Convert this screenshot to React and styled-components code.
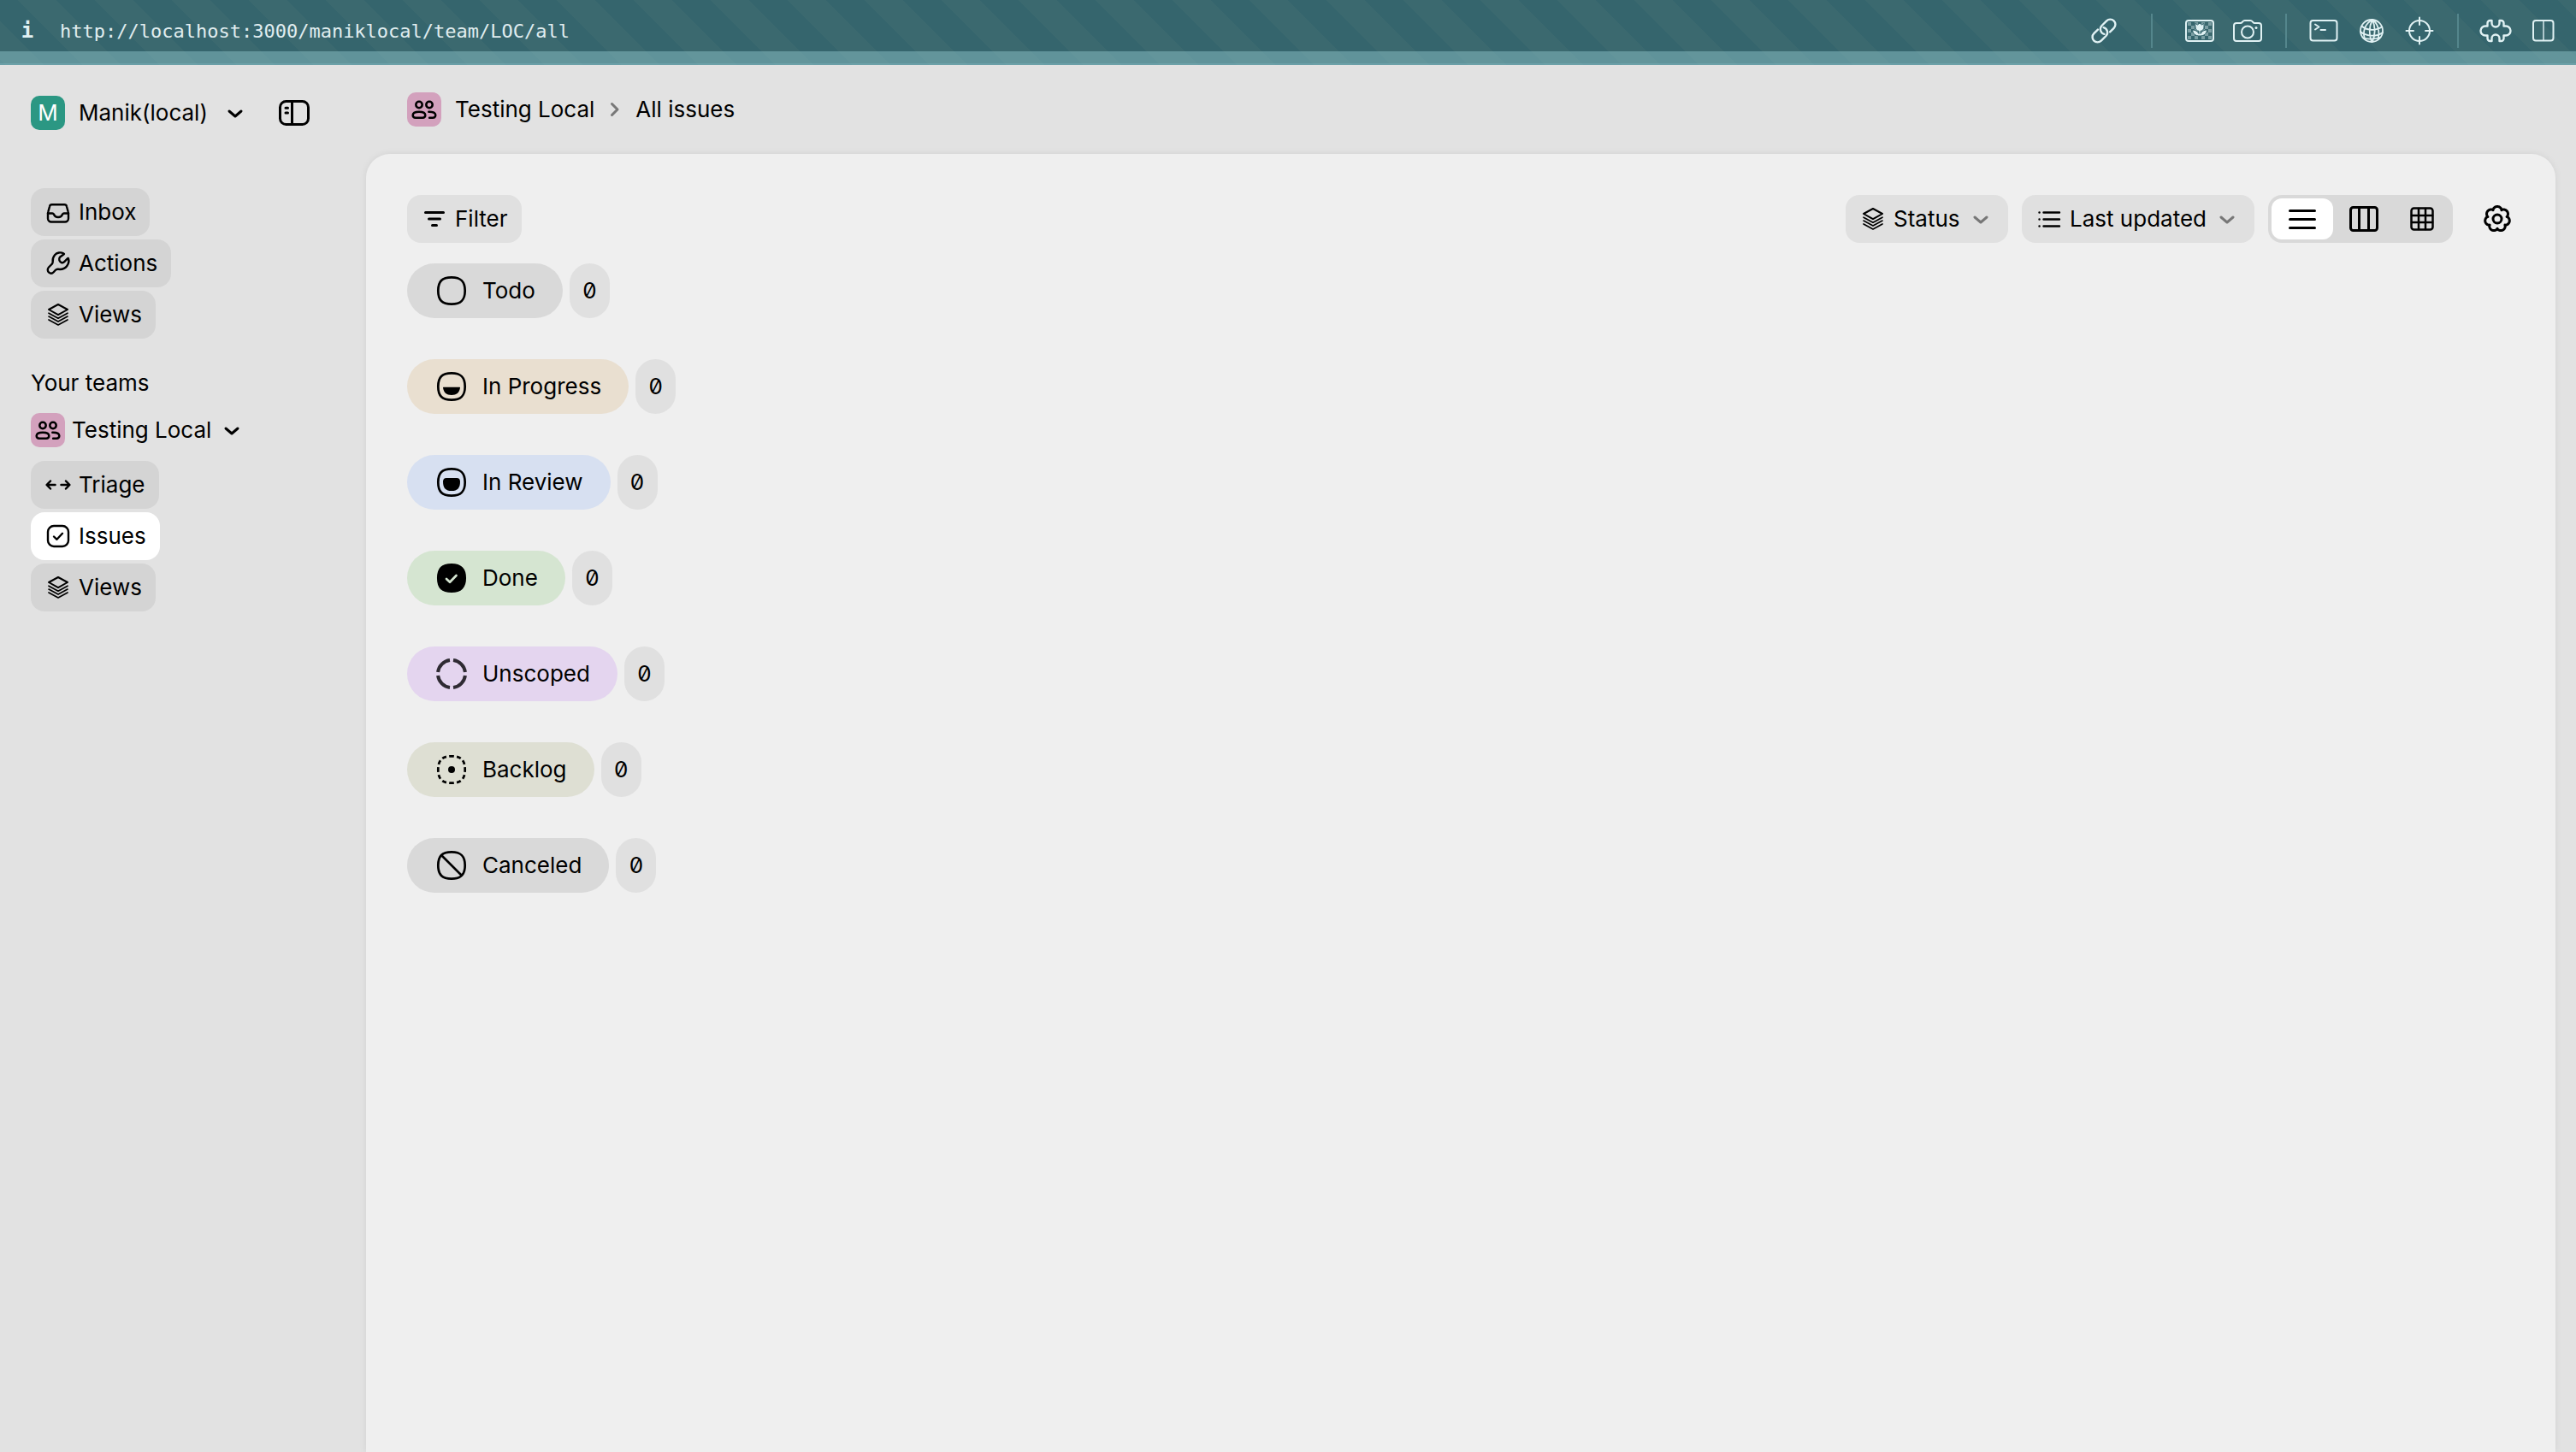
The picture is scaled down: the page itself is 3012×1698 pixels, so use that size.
import React from "react";
import styled, { createGlobalStyle } from "styled-components";

const GlobalStyle = createGlobalStyle`
  *, *::before, *::after { box-sizing: border-box; }
  body {
    margin: 0;
    background: #e2e2e2;
    color: #000;
    font-family: Inter, "Liberation Sans", sans-serif;
    font-size: 26px;
    line-height: 32px;
  }
  a { color: inherit; text-decoration: none; }
  button, input, select { font: inherit; color: inherit; }
`;

const Page = styled.div`
  display: flex;
  flex-direction: column;
  min-height: 100vh;
`;

/* ---------- address bar ---------- */

const AddressBar = styled.header`
  background-color: #35656d;
  background-image: linear-gradient(
    45deg,
    #3b696f 25%, transparent 25%, transparent 50%,
    #3b696f 50%, #3b696f 75%, transparent 75%
  );
  background-size: 90px 90px;
  background-position: 21px 0;
  color: #e0f1f3;
`;

const AddressRow = styled.div`
  display: flex;
  align-items: center;
  height: 60px;
  padding: 12px 10px 0 24px;
`;

const AddressEdge = styled.div`
  height: 16px;
  background: rgba(149, 204, 208, 0.45);
  border-bottom: 2px solid rgba(130, 190, 200, 0.3);
`;

const InfoButton = styled.button`
  width: 16px;
  padding: 0;
  border: 0;
  background: none;
  font-family: "DejaVu Sans Mono", monospace;
  font-size: 24px;
  font-weight: 700;
`;

const AddressInput = styled.input`
  flex: 1;
  min-width: 0;
  margin-left: 30px;
  padding: 2px 0 0;
  border: 0;
  background: none;
  color: #e0edef;
  font-family: "DejaVu Sans Mono", monospace;
  font-size: 22px;
`;

const ToolButton = styled.button`
  display: flex;
  align-items: center;
  justify-content: center;
  width: 56px;
  height: 48px;
  padding: 0;
  border: 0;
  background: none;
`;

const ToolDivider = styled.span`
  width: 2px;
  height: 40px;
  margin: ${(p) => (p.$wide ? "0 27px" : "0 15px 0 16px")};
  background: #54868c;
`;

/* ---------- shell ---------- */

const Shell = styled.div`
  display: flex;
  flex: 1;
`;

const Sidebar = styled.aside`
  flex: 0 0 428px;
  padding: 36px 66px 36px 36px;
`;

const WorkspaceRow = styled.div`
  display: flex;
  align-items: center;
  justify-content: space-between;
  height: 40px;
  margin-bottom: 68px;
`;

const Switcher = styled.button`
  display: flex;
  align-items: center;
  gap: ${(p) => p.$gap}px;
  height: 40px;
  padding: 0;
  border: 0;
  background: none;
  white-space: nowrap;
`;

const Avatar = styled.span`
  display: flex;
  align-items: center;
  justify-content: center;
  flex: none;
  width: 40px;
  height: 40px;
  border-radius: 10px;
  background: ${(p) => p.$bg};
  color: ${(p) => p.$fg || "#000"};
`;

const IconButton = styled.button`
  display: flex;
  align-items: center;
  justify-content: center;
  padding: 0;
  border: 0;
  background: none;
  height: 40px;
  width: ${(p) => p.$width}px;
`;

const NavList = styled.nav`
  display: flex;
  flex-direction: column;
  align-items: flex-start;
  gap: 4px;
`;

const NavLink = styled.a`
  display: flex;
  align-items: center;
  gap: 8px;
  height: 56px;
  padding: 0 16px;
  border-radius: 16px;
  background: ${(p) => (p.$active ? "#fff" : "#d4d4d4")};
`;

const SectionTitle = styled.h2`
  margin: 34px 0 17px;
  font-size: 26px;
  font-weight: 400;
  line-height: 36px;
`;

const TeamBlock = styled.div`
  display: flex;
  flex-direction: column;
  align-items: flex-start;
  gap: 16px;
`;

/* ---------- main ---------- */

const Main = styled.main`
  display: flex;
  flex: 1;
  flex-direction: column;
  min-width: 0;
  padding-right: 24px;
`;

const Breadcrumb = styled.nav`
  display: flex;
  align-items: center;
  height: 104px;
  padding-left: 48px;
`;

const Crumb = styled.a`
  display: flex;
  align-items: center;
  gap: 16px;
`;

const CrumbArrow = styled.span`
  display: flex;
  padding: 0 8px;
  color: #777;
`;

const Panel = styled.section`
  flex: 1;
  padding: 48px;
  border-radius: 28px 28px 0 0;
  background: #efefef;
  box-shadow: 0 0 8px rgba(0, 0, 0, 0.07);
`;

const Toolbar = styled.div`
  display: flex;
  align-items: center;
  gap: 16px;
  margin-bottom: 24px;
`;

const FilterButton = styled.button`
  display: flex;
  align-items: center;
  gap: 8px;
  height: 56px;
  margin-right: auto;
  padding: 0 16px;
  border: 0;
  border-radius: 16px;
  background: #e0e0e0;
`;

const SelectBox = styled.label`
  display: flex;
  align-items: center;
  gap: 8px;
  height: 56px;
  padding: 0 16px;
  border-radius: 16px;
  background: #e0e0e0;
`;

const Select = styled.select`
  appearance: none;
  height: 56px;
  padding: 0;
  border: 0;
  background: none;
`;

const Muted = styled.span`
  display: flex;
  color: #777;
`;

const Segments = styled.fieldset`
  display: flex;
  height: 56px;
  margin: 0;
  padding: 4px;
  border: 0;
  border-radius: 16px;
  background: #d9d9d9;
`;

const Segment = styled.label`
  display: flex;
  align-items: center;
  justify-content: center;
  width: ${(p) => p.$width}px;
  height: 48px;
  border-radius: 12px;
  &:has(input:checked) { background: #fff; }
`;

const HiddenRadio = styled.input`
  appearance: none;
  width: 0;
  height: 0;
  margin: 0;
`;

const SettingsSlot = styled.div`
  padding-left: 16px;
`;

const GroupList = styled.div`
  display: flex;
  flex-direction: column;
  gap: 48px;
`;

const GroupRow = styled.div`
  display: flex;
  align-items: center;
  gap: 8px;
`;

const GroupPill = styled.button`
  display: flex;
  align-items: center;
  gap: 16px;
  height: 64px;
  padding: 0 32px;
  border: 0;
  border-radius: 32px;
  background: ${(p) => p.$bg};
`;

const Count = styled.span`
  display: flex;
  align-items: center;
  justify-content: center;
  width: 47px;
  height: 64px;
  border-radius: 24px;
  background: #e0e0e0;
  font-feature-settings: "zero" 1;
`;

/* ---------- icons ---------- */

function Icon({ size = 32, stroke = 2, children }) {
  return (
    <svg width={size} height={size} viewBox={`0 0 ${size} ${size}`} fill="none" stroke="currentColor"
      strokeWidth={stroke} strokeLinecap="round" strokeLinejoin="round" aria-hidden="true">
      {children}
    </svg>
  );
}

const ChevronDown = () => <Icon stroke={3}><path d="M9 14l7 6 7-6" /></Icon>;
const ChevronRight = () => <Icon stroke={3}><path d="M12.5 9.5l6.5 6.5-6.5 6.5" /></Icon>;

const InboxIcon = () => (
  <Icon stroke={2.4}>
    <path d="M8.5 7.3h15a2.5 2.5 0 0 1 2.4 1.9l1.8 6.6q.3 1 .3 2v5.700a4 4 0 0 1-4 4H8a4 4 0 0 1-4-4v-5.700q0-1 .3-2l1.800-6.600a2.500 2.500 0 0 1 2.400-1.900z" />
    <path d="M4 17.500h5.200c.8 0 1.400.5 1.800 1.200q1.300 3.300 5 3.300t5-3.300c.4-.7 1-1.200 1.800-1.200H28" />
  </Icon>
);

const WrenchIcon = () => (
  <Icon stroke={2.4}>
    <path d="M22.500 4.500C19 2.500 14.500 3.300 12 6.200c-2.200 2.600-2.600 4.800-2.300 8 .1 1.200-.3 2-1.200 2.800L5 20.500c-1.800 1.900-1.600 4.600.2 6.100 1.700 1.400 4 1.200 5.500-.4l2-2.200c1-1 1.900-1.400 3.300-1.200 4 .5 8-.6 10.300-3.800 2-2.700 2.600-5.500 1.700-8.600-.1-.4-.5-.5-.8-.2l-4 4c-1 1-2.400 1.200-3.700.6-2.300-1.100-3-3.800-1.500-6l4.700-3.600c.4-.3.3-.5-.2-.7z" />
  </Icon>
);

const LayersIcon = () => (
  <Icon>
    <path d="M16 4l11 6-11 6.200L5 10z" />
    <path strokeWidth="1.700" d="M5 14.200l11 6 11-6M5 18.100l11 6 11-6M5 22l11 6 11-6" />
  </Icon>
);

const TriageIcon = () => (
  <Icon stroke={2.5}>
    <path d="M12.500 16H3M7 11.500L2.600 16 7 20.500M19.500 16H29M25 11.500l4.400 4.500-4.400 4.500" />
  </Icon>
);

const IssueIcon = () => (
  <Icon stroke={2.4}>
    <rect x="4" y="4" width="24" height="24" rx="7" />
    <path d="M11 16.500l3.500 3.300 6.500-7" />
  </Icon>
);

const PeopleIcon = () => (
  <Icon size={40} stroke={2.5}>
    <circle cx="14" cy="14.500" r="3.700" />
    <circle cx="26" cy="14.500" r="3.700" />
    <path d="M6.700 26.800c0-2.400 3-4 7.300-4s7.300 1.600 7.300 4c0 1.900-1.400 2.900-3.200 2.900H9.900c-1.800 0-3.200-1-3.200-2.900z" />
    <path d="M25.300 22.800h.7c4.300 0 7.300 1.600 7.300 4 0 1.900-1.400 2.900-3.200 2.900h-4" />
  </Icon>
);

const SidebarIcon = () => (
  <Icon size={36} stroke={3}>
    <rect x="1.500" y="4.500" width="33" height="27" rx="7" />
    <path d="M15.500 5v26" />
    <path d="M8 12.200h2.500M8 18h2.500" />
  </Icon>
);

const FilterIcon = () => <Icon stroke={3}><path d="M5.500 8.500h21M9.500 16h13M13.500 23.500h5" /></Icon>;

const ListIcon = () => (
  <Icon stroke={2.4}>
    <path d="M9.500 8.500h18.500M9.500 16.500h18.500M9.500 24.500h18.500M4.500 8.500h.1M4.500 16.500h.1M4.500 24.500h.1" />
  </Icon>
);

const RowsIcon = () => <Icon size={36} stroke={3}><path d="M3.500 8.500h29M3.500 18.500h29M3.500 28.500h29" /></Icon>;

const ColumnsIcon = () => (
  <Icon size={36} stroke={3}>
    <rect x="2.500" y="4.500" width="31" height="27" rx="3" />
    <path d="M12.500 5v26M23.500 5v26" />
  </Icon>
);

const GridIcon = () => (
  <Icon size={36} stroke={2.5}>
    <rect x="5.500" y="5.500" width="25" height="25" rx="3" />
    <path d="M14 6v24M22 6v24M6 14h24M6 22h24" />
  </Icon>
);

const gearPath =
  Array.from({ length: 168 }, (_, i) => {
    const a = (i / 168) * Math.PI * 2;
    const r = 11.4 + 3.1 * Math.pow(Math.abs(Math.cos(3.5 * a)), 0.7);
    return `${i ? "L" : "M"}${(20 + r * Math.sin(a)).toFixed(2)} ${(20 - r * Math.cos(a)).toFixed(2)}`;
  }).join("") + "z";

const GearIcon = () => (
  <Icon size={40} stroke={3}>
    <path d={gearPath} />
    <circle cx="20" cy="20" r="5" />
  </Icon>
);

const SQUIRCLE = "M20 4.300C31 4.300 35.700 9 35.700 20S31 35.700 20 35.700 4.300 31 4.300 20 9 4.300 20 4.300z";

const TodoMark = () => <Icon size={40} stroke={2.7}><path d={SQUIRCLE} /></Icon>;

const ProgressMark = () => (
  <Icon size={40} stroke={2.7}>
    <path d={SQUIRCLE} />
    <path d="M10.500 20.800h19c.4 0 .6.3.5.8-1 6-4 8.400-10 8.400s-9-2.400-10-8.400c-.1-.5.100-.8.5-.8z" fill="currentColor" stroke="none" />
  </Icon>
);

const ReviewMark = () => (
  <Icon size={40} stroke={2.7}>
    <path d={SQUIRCLE} />
    <path d="M14 15h12c2.700 0 4 1.500 4 4.200C30 26.500 27 30 20 30s-10-3.500-10-10.800C10 16.500 11.300 15 14 15z" fill="currentColor" stroke="none" />
  </Icon>
);

const DoneMark = () => (
  <Icon size={40} stroke={2.7}>
    <path d={SQUIRCLE} fill="currentColor" />
    <path d="M14 21l4 3.700 7.500-7.700" stroke="#d5e5d1" />
  </Icon>
);

const UnscopedMark = () => (
  <Icon size={40} stroke={4}>
    <path strokeLinecap="butt" stroke="#2f2b33"
      d="M22 4.100A16 16 0 0 1 35.900 18M35.900 22A16 16 0 0 1 22 35.900M18 35.900A16 16 0 0 1 4.100 22M4.100 18A16 16 0 0 1 18 4.100" />
  </Icon>
);

const BacklogMark = () => (
  <Icon size={40} stroke={2.7}>
    <path d={SQUIRCLE} strokeLinecap="butt" pathLength="120" strokeDasharray="6 4" strokeDashoffset="3" />
    <circle cx="20" cy="20" r="4" fill="currentColor" stroke="none" />
  </Icon>
);

const CanceledMark = () => (
  <Icon size={40} stroke={2.7}>
    <path d={SQUIRCLE} />
    <path d="M9 9l22.500 22.500" />
  </Icon>
);

const LinkTool = () => (
  <Icon size={40} stroke={2.4}>
    <g transform="translate(20 20) rotate(-45)">
      <path d="M-4-6h-6.500a6 6 0 0 0 0 12h8A6 6 0 0 0 2.500-3" />
      <path d="M4 6h6.500a6 6 0 0 0 0-12h-8A6 6 0 0 0-2.500 3" />
    </g>
  </Icon>
);

const ImageTool = () => (
  <Icon size={40}>
    <g fill="currentColor" stroke="none" opacity="0.4">
      {[0, 1, 2, 3, 4].map((row) =>
        [0, 1, 2, 3, 4, 5, 6].map((col) =>
          (row + col) % 2 === 0 ? <rect key={`${row}-${col}`} x={6 + col * 4} y={10 + row * 4} width="4" height="4" /> : null
        )
      )}
    </g>
    <rect x="4" y="8" width="32" height="24" rx="3" />
    <g fill="currentColor" stroke="#35656d" strokeWidth="1">
      <path d="M15 11.500l2.500 1.500 2.500-2 2.500 2 2.500-1.500v4.500c0 2.300-1.700 4-4 4.300v3.200c1.500-3 4-4.500 7.500-4.500-.5 4.500-3.500 7-8.500 7s-8-2.500-8.500-7c3.500 0 6 1.500 7.500 4.500v-3.200c-2.300-.3-4-2-4-4.300z" />
    </g>
  </Icon>
);

const CameraTool = () => (
  <Icon size={40}>
    <path d="M7 11h4.500c1.200 0 1.800-.6 2.600-1.500.8-1 1.400-1.500 2.600-1.500h6.600c1.200 0 1.800.5 2.600 1.500.8.9 1.400 1.500 2.600 1.500H33a3 3 0 0 1 3 3v15a3 3 0 0 1-3 3H7a3 3 0 0 1-3-3V14a3 3 0 0 1 3-3z" />
    <circle cx="20" cy="21.500" r="7" />
    <circle cx="30" cy="16.500" r="1.500" fill="currentColor" stroke="none" />
  </Icon>
);

const TerminalTool = () => (
  <Icon size={40}>
    <rect x="4.500" y="8" width="31" height="23.500" rx="3" />
    <path d="M10 12.500l4.500 3-4.500 3M16.500 19h5.500" />
  </Icon>
);

const GlobeTool = () => (
  <Icon size={40} stroke={1.8}>
    <circle cx="20" cy="20" r="13" />
    <path d="M21 7c-8 4-12 13-9 22.500M21 7c-4 8-4 18-1 26M21 7c3 7 3.500 17 0 26M21 7c6 4 9 13 6.500 23M8.500 14.500c5 5 16 6 23.500 1M7 21c6 5 18 7 26 1M10.500 28.500c5 1.500 12 1.500 19-.5" />
  </Icon>
);

const TargetTool = () => (
  <Icon size={40}>
    <circle cx="20" cy="20" r="12" />
    <path d="M20 4.500v8.500M20 27v8.500M4.500 20H13M27 20h8.500" />
  </Icon>
);

const PuzzleTool = () => (
  <Icon size={40} stroke={2.4}>
    <path d="M10.500 14.500V11a3 3 0 0 1 3-3h2v3a4.500 4.500 0 0 0 9 0V8h2a3 3 0 0 1 3 3v3.500H32a5.500 5.500 0 0 1 0 11h-2.500V29a3 3 0 0 1-3 3h-2v-3a4.500 4.500 0 0 0-9 0v3h-2a3 3 0 0 1-3-3v-3.500H8a5.500 5.500 0 0 1 0-11z" />
  </Icon>
);

const SplitTool = () => (
  <Icon size={40}>
    <rect x="8" y="8" width="23.500" height="23.500" rx="3" />
    <path d="M20 8v23" opacity="0.7" />
  </Icon>
);

/* ---------- data ---------- */

const mainLinks = [
  { label: "Inbox", Mark: InboxIcon },
  { label: "Actions", Mark: WrenchIcon },
  { label: "Views", Mark: LayersIcon },
];

const teamLinks = [
  { label: "Triage", Mark: TriageIcon },
  { label: "Issues", Mark: IssueIcon, active: true },
  { label: "Views", Mark: LayersIcon },
];

const groups = [
  { label: "Todo", Mark: TodoMark, bg: "#d9d9d9", count: 0 },
  { label: "In Progress", Mark: ProgressMark, bg: "#e9dfd0", count: 0 },
  { label: "In Review", Mark: ReviewMark, bg: "#d7e0f1", count: 0 },
  { label: "Done", Mark: DoneMark, bg: "#d5e5d1", count: 0 },
  { label: "Unscoped", Mark: UnscopedMark, bg: "#e4d5ef", count: 0 },
  { label: "Backlog", Mark: BacklogMark, bg: "#dedfd3", count: 0 },
  { label: "Canceled", Mark: CanceledMark, bg: "#d9d9d9", count: 0 },
];

const layouts = [
  { label: "List", Mark: RowsIcon, width: 72 },
  { label: "Board", Mark: ColumnsIcon, width: 72 },
  { label: "Grid", Mark: GridIcon, width: 64 },
];

function Tool({ label, children }) {
  return <ToolButton type="button" aria-label={label}>{children}</ToolButton>;
}

function Links({ items, label }) {
  return (
    <NavList aria-label={label}>
      {items.map(({ label: text, Mark, active }) => (
        <NavLink key={text} href={`#${text.toLowerCase()}`} $active={active} aria-current={active ? "page" : undefined}>
          <Mark />
          {text}
        </NavLink>
      ))}
    </NavList>
  );
}

function Dropdown({ label, value, Mark }) {
  return (
    <SelectBox>
      <Mark />
      <Select aria-label={label} defaultValue={value}>
        <option>{value}</option>
      </Select>
      <Muted><ChevronDown /></Muted>
    </SelectBox>
  );
}

export default function App() {
  return (
    <Page>
      <GlobalStyle />
      <AddressBar>
        <AddressRow>
          <InfoButton type="button" aria-label="Site information">i</InfoButton>
          <AddressInput aria-label="Address" defaultValue="http://localhost:3000/maniklocal/team/LOC/all" />
          <Tool label="Copy link"><LinkTool /></Tool>
          <ToolDivider $wide />
          <Tool label="Image"><ImageTool /></Tool>
          <Tool label="Capture"><CameraTool /></Tool>
          <ToolDivider />
          <Tool label="Console"><TerminalTool /></Tool>
          <Tool label="Network"><GlobeTool /></Tool>
          <Tool label="Inspect"><TargetTool /></Tool>
          <ToolDivider />
          <Tool label="Extensions"><PuzzleTool /></Tool>
          <Tool label="Split view"><SplitTool /></Tool>
        </AddressRow>
        <AddressEdge />
      </AddressBar>

      <Shell>
        <Sidebar>
          <WorkspaceRow>
            <Switcher type="button" $gap={16}>
              <Avatar $bg="#2b9783" $fg="#fff">M</Avatar>
              Manik(local)
              <ChevronDown />
            </Switcher>
            <IconButton type="button" aria-label="Toggle sidebar" $width={36}><SidebarIcon /></IconButton>
          </WorkspaceRow>
          <Links items={mainLinks} label="Workspace" />
          <SectionTitle>Your teams</SectionTitle>
          <TeamBlock>
            <Switcher type="button" $gap={8}>
              <Avatar $bg="#d3a1bd"><PeopleIcon /></Avatar>
              Testing Local
              <ChevronDown />
            </Switcher>
            <Links items={teamLinks} label="Team" />
          </TeamBlock>
        </Sidebar>

        <Main>
          <Breadcrumb aria-label="Breadcrumb">
            <Crumb href="#team">
              <Avatar $bg="#d3a1bd"><PeopleIcon /></Avatar>
              Testing Local
            </Crumb>
            <CrumbArrow><ChevronRight /></CrumbArrow>
            <Crumb href="#issues">All issues</Crumb>
          </Breadcrumb>

          <Panel>
            <Toolbar>
              <FilterButton type="button"><FilterIcon />Filter</FilterButton>
              <Dropdown label="Group by" value="Status" Mark={LayersIcon} />
              <Dropdown label="Sort by" value="Last updated" Mark={ListIcon} />
              <Segments aria-label="Layout">
                {layouts.map(({ label, Mark, width }, i) => (
                  <Segment key={label} $width={width}>
                    <HiddenRadio type="radio" name="layout" aria-label={label} defaultChecked={i === 0} />
                    <Mark />
                  </Segment>
                ))}
              </Segments>
              <SettingsSlot>
                <IconButton type="button" aria-label="Settings" $width={40}><GearIcon /></IconButton>
              </SettingsSlot>
            </Toolbar>

            <GroupList>
              {groups.map(({ label, Mark, bg, count }) => (
                <GroupRow key={label}>
                  <GroupPill type="button" $bg={bg}><Mark />{label}</GroupPill>
                  <Count>{count}</Count>
                </GroupRow>
              ))}
            </GroupList>
          </Panel>
        </Main>
      </Shell>
    </Page>
  );
}
